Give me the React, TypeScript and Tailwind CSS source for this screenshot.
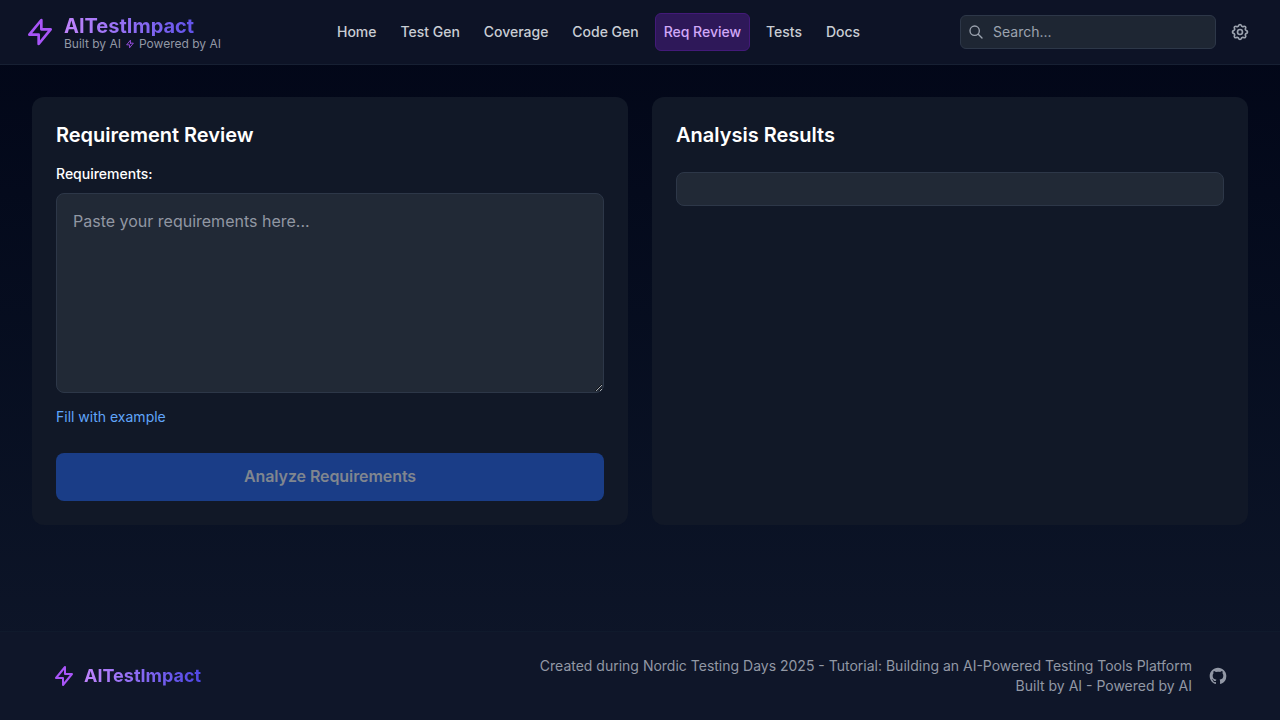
import React from "react";

const navItems = ["Home", "Test Gen", "Coverage", "Code Gen", "Req Review", "Tests", "Docs"];

function Bolt({ className }: { className: string }) {
  return (
    <svg className={className} viewBox="0 0 24 24" fill="none" stroke="currentColor" strokeWidth={2} strokeLinecap="round" strokeLinejoin="round">
      <path d="M13 10V3L4 14h7v7l9-11h-7z" />
    </svg>
  );
}

function SearchIcon() {
  return (
    <svg className="size-4 shrink-0 text-[#9ca3af]" viewBox="0 0 24 24" fill="none" stroke="currentColor" strokeWidth={2} strokeLinecap="round" strokeLinejoin="round">
      <path d="M21 21l-6-6m2-5a7 7 0 11-14 0 7 7 0 0114 0z" />
    </svg>
  );
}

function Cog() {
  return (
    <svg className="size-5" viewBox="0 0 24 24" fill="none" stroke="currentColor" strokeWidth={2} strokeLinecap="round" strokeLinejoin="round">
      <path d="M10.325 4.317c.426-1.756 2.924-1.756 3.35 0a1.724 1.724 0 002.573 1.066c1.543-.94 3.31.826 2.37 2.37a1.724 1.724 0 001.065 2.572c1.756.426 1.756 2.924 0 3.35a1.724 1.724 0 00-1.066 2.573c.94 1.543-.826 3.31-2.37 2.37a1.724 1.724 0 00-2.572 1.065c-.426 1.756-2.924 1.756-3.35 0a1.724 1.724 0 00-2.573-1.066c-1.543.94-3.31-.826-2.37-2.37a1.724 1.724 0 00-1.065-2.572c-1.756-.426-1.756-2.924 0-3.35a1.724 1.724 0 001.066-2.573c-.94-1.543.826-3.31 2.37-2.37.996.608 2.296.07 2.572-1.065z" />
      <path d="M15 12a3 3 0 11-6 0 3 3 0 016 0z" />
    </svg>
  );
}

function GitHub() {
  return (
    <svg className="size-5" viewBox="0 0 24 24" fill="currentColor">
      <path fillRule="evenodd" clipRule="evenodd" d="M12 2C6.477 2 2 6.484 2 12.017c0 4.425 2.865 8.18 6.839 9.504.5.092.682-.217.682-.483 0-.237-.008-.868-.013-1.703-2.782.605-3.369-1.343-3.369-1.343-.454-1.158-1.11-1.466-1.11-1.466-.908-.62.069-.608.069-.608 1.003.07 1.531 1.032 1.531 1.032.892 1.53 2.341 1.088 2.91.832.092-.647.35-1.088.636-1.338-2.22-.253-4.555-1.113-4.555-4.951 0-1.093.39-1.988 1.029-2.688-.103-.253-.446-1.272.098-2.65 0 0 .84-.27 2.75 1.026A9.564 9.564 0 0112 6.844c.85.004 1.705.115 2.504.337 1.909-1.296 2.747-1.027 2.747-1.027.546 1.379.202 2.398.1 2.651.64.7 1.028 1.595 1.028 2.688 0 3.848-2.339 4.695-4.566 4.943.359.309.678.92.678 1.855 0 1.338-.012 2.419-.012 2.747 0 .268.18.58.688.482A10.019 10.019 0 0022 12.017C22 6.484 17.522 2 12 2z" />
    </svg>
  );
}

export default function App() {
  return (
    <div className="flex h-screen flex-col overflow-hidden bg-linear-to-b from-[#020617] to-[#0f172a] font-['Inter',sans-serif] text-white">
      <header className="flex h-[65px] shrink-0 items-center border-b border-[#172033] bg-[#0d1326] px-6">
        <div className="flex w-[197px] items-center gap-2">
          <Bolt className="size-8 shrink-0 text-[#a855f7]" />
          <div className="flex flex-col items-start pt-1">
            <span className="bg-linear-to-r from-[#c084fc] to-[#4f46e5] bg-size-[157px_100%] bg-no-repeat bg-clip-text text-xl leading-5 font-bold whitespace-nowrap text-transparent">AITestImpact</span>
            <span className="flex items-center gap-1 text-xs leading-4 whitespace-nowrap text-[#9298a5]">
              Built by AI <Bolt className="size-2.5 text-[#a855f7]" /> Powered by AI
            </span>
          </div>
        </div>
        <nav className="ml-[108px] flex items-center gap-2 text-sm font-medium tracking-[-0.015px] whitespace-nowrap">
          {navItems.map((item) => (
            <a
              key={item}
              className={
                item === "Req Review"
                  ? "rounded-md border border-[#431a79] bg-[#2e1859] px-2 py-2 text-[#d2a8f8]"
                  : "px-2 py-2 text-[#c9cdd4]"
              }
            >
              {item}
            </a>
          ))}
        </nav>
        <div className="ml-auto flex items-center gap-2">
          <div className="flex h-[34px] w-64 items-center gap-[9px] rounded-md border border-[#2d3748] bg-[#1e2633] px-[7px]">
            <SearchIcon />
            <input className="w-full bg-transparent text-sm outline-none placeholder:text-[#9ca3af]" placeholder="Search..." />
          </div>
          <button className="p-1.5 text-[#9ca3af]">
            <Cog />
          </button>
        </div>
      </header>

      <main className="grid flex-1 grid-cols-2 items-start gap-6 px-8 pt-8">
        <section className="flex h-[428px] flex-col rounded-xl bg-[#111827] p-6">
          <h2 className="mb-[15px] text-xl leading-7 font-semibold">Requirement Review</h2>
          <label className="mb-[8.6px] text-sm leading-5 font-medium">Requirements:</label>
          <textarea
            className="h-[200px] w-full shrink-0 resize-y rounded-lg border border-[#2d3748] bg-[#212936] px-4 pt-[15px] pb-4 text-base outline-none placeholder:text-[#9197a3]"
            placeholder="Paste your requirements here..."
          />
          <button className="mt-3.5 self-start text-sm leading-5 text-[#60a5fa]">Fill with example</button>
          <button className="mt-auto h-12 w-full rounded-lg bg-[#1a3d87] pb-0.5 text-base font-semibold tracking-[-0.08px] text-[#80868f]">Analyze Requirements</button>
        </section>
        <section className="flex h-[428px] flex-col rounded-xl bg-[#111827] p-6">
          <h2 className="mb-[23px] text-xl leading-7 font-semibold">Analysis Results</h2>
          <div className="h-[34px] rounded-lg border border-[#2d3748] bg-[#212936]" />
        </section>
      </main>

      <footer className="flex h-[89px] shrink-0 items-center justify-between border-t border-[#101a2c] bg-[#0f1629] px-[52px]">
        <div className="flex items-center gap-2">
          <Bolt className="size-6 text-[#a855f7]" />
          <span className="bg-linear-to-r from-[#c084fc] to-[#4f46e5] bg-clip-text text-lg leading-7 font-bold text-transparent">AITestImpact</span>
        </div>
        <div className="flex items-center gap-4 text-[#9298a5]">
          <div className="pb-px text-right text-sm leading-5">
            <p>Created during Nordic Testing Days 2025 - Tutorial: Building an AI-Powered Testing Tools Platform</p>
            <p>Built by AI - Powered by AI</p>
          </div>
          <GitHub />
        </div>
      </footer>
    </div>
  );
}
